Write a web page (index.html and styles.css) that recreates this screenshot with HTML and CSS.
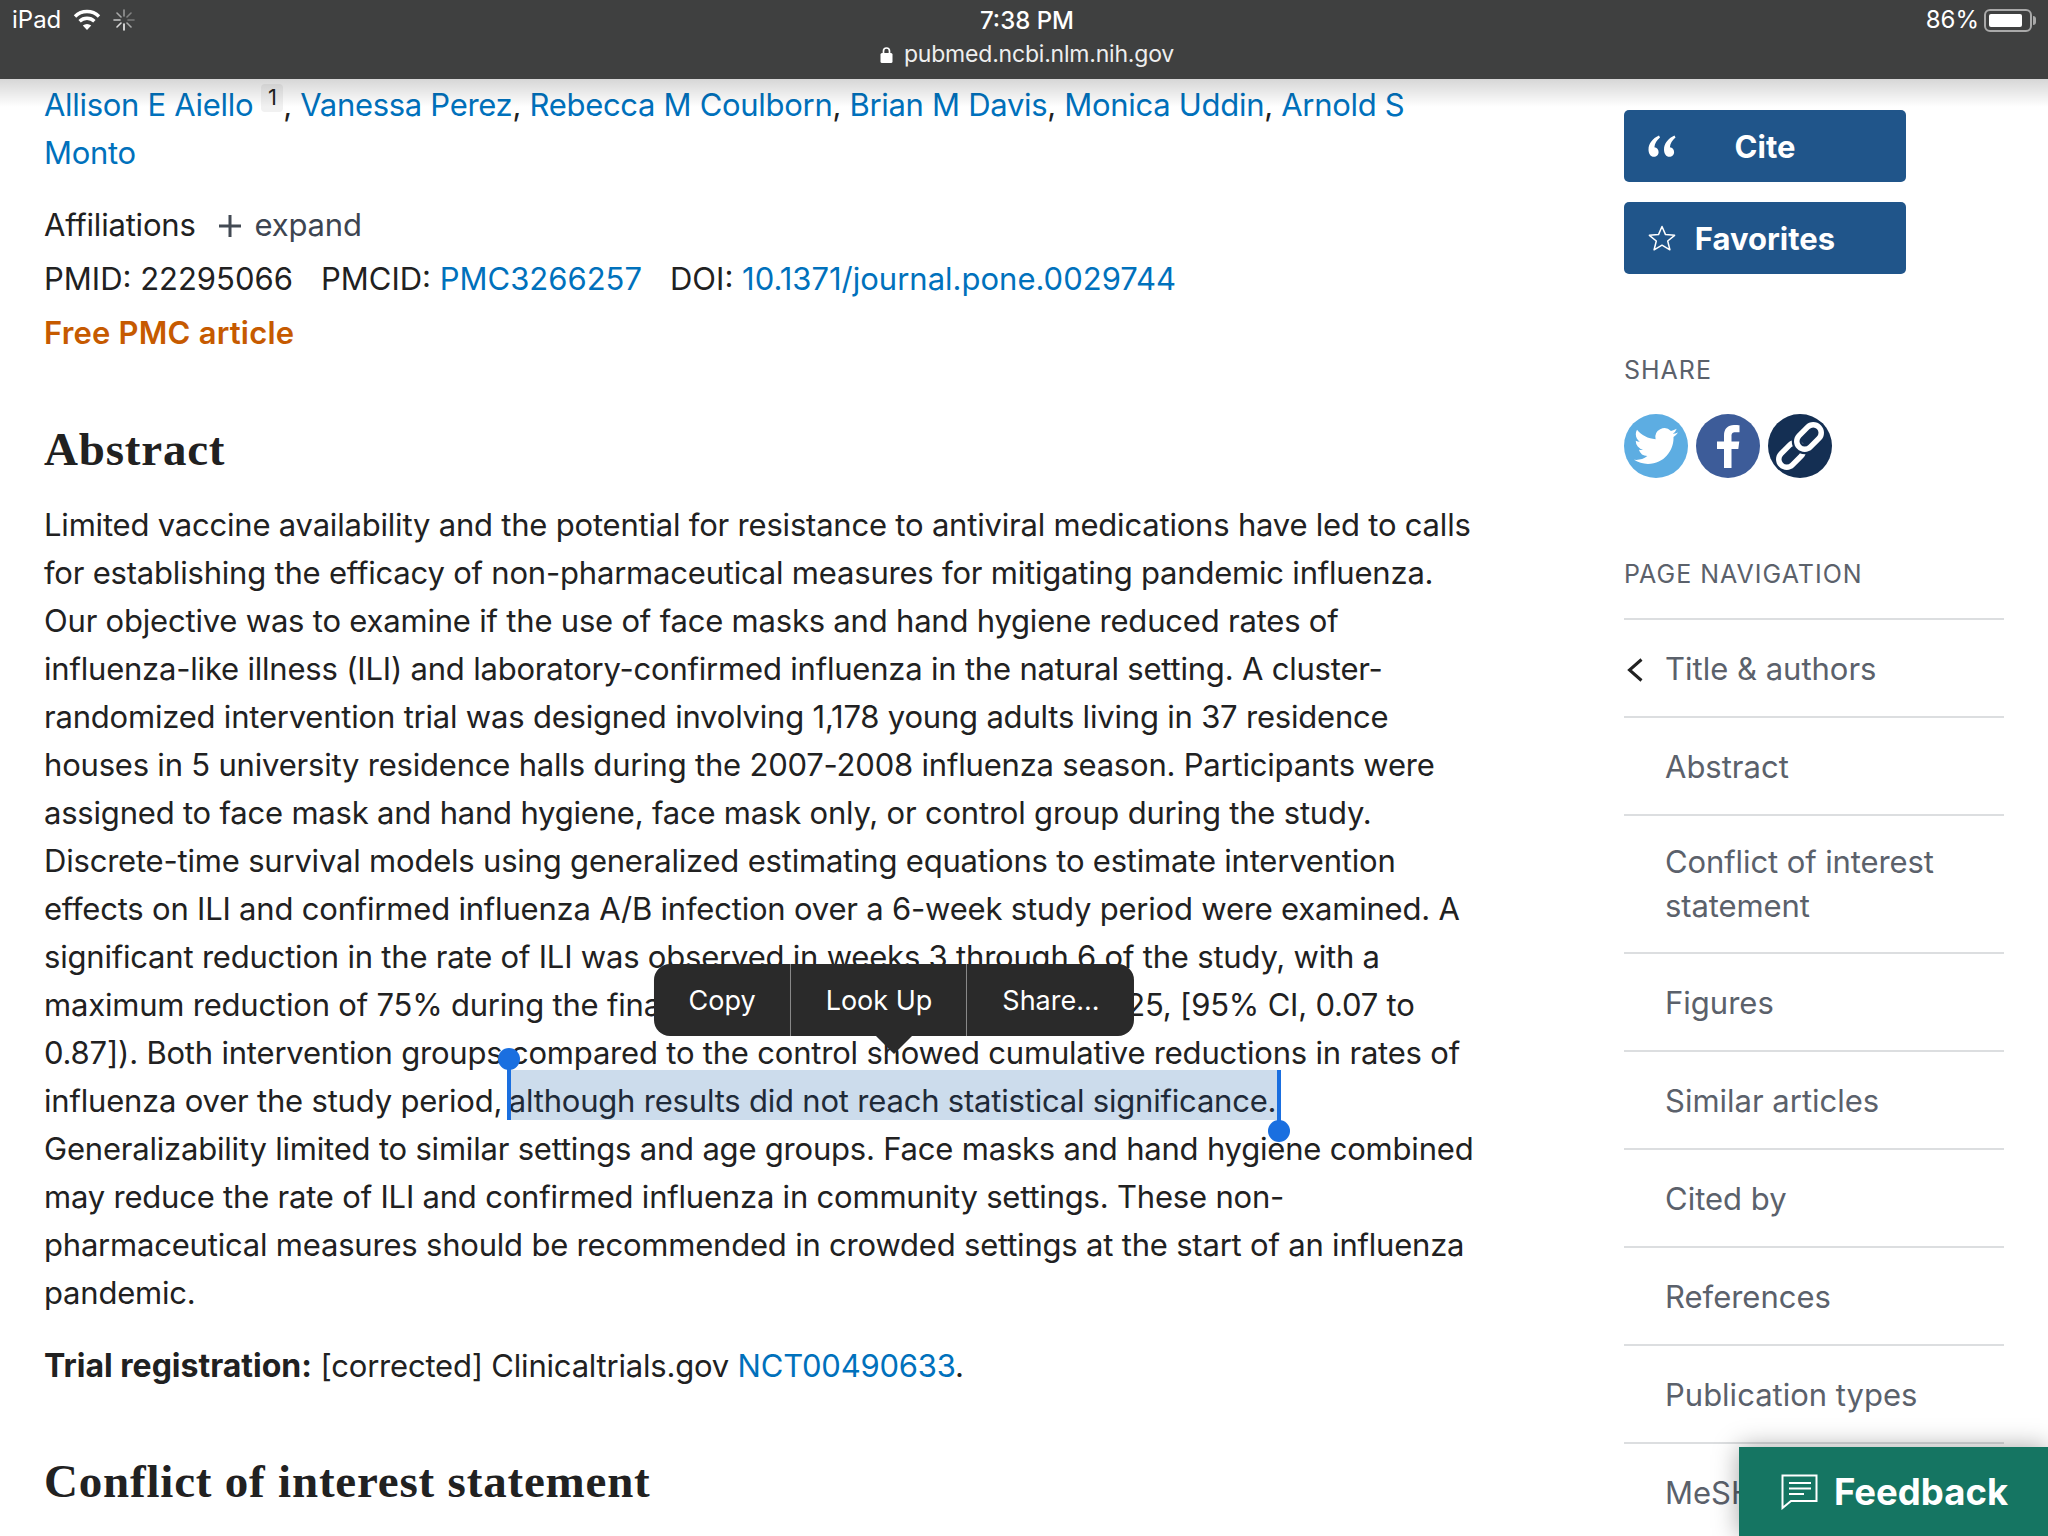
FILE: index.html
```html
<!DOCTYPE html>
<html lang="en">

<head>
    <meta charset="UTF-8">
    <title>PubMed abstract on iPad</title>
    <link rel="stylesheet" href="styles.css">
</head>

<body>
    <header class="status-bar">
        <div class="status-left">
            <span>iPad</span>
            <svg class="wifi" width="28" height="22" viewBox="0 0 28 22">
                <path d="M2 7.500 A17 17 0 0 1 26 7.500" fill="none" stroke="#fff" stroke-width="3.400" />
                <path d="M6.600 12.200 A10.600 10.600 0 0 1 21.400 12.200" fill="none" stroke="#fff" stroke-width="3.400" />
                <path d="M14 21 L9.800 16.600 A6 6 0 0 1 18.200 16.600 Z" fill="#fff" />
            </svg>
            <svg class="spinner" width="22" height="22" viewBox="0 0 22 22" stroke="#fff" stroke-width="1.600" stroke-linecap="round">
                <path d="M11 1v6" opacity=".45" />
                <path d="M18 4l-4 4" opacity=".35" />
                <path d="M21 11h-6" opacity=".3" />
                <path d="M18 18l-4-4" opacity=".55" />
                <path d="M11 21v-6" opacity=".95" />
                <path d="M4 18l4-4" opacity=".8" />
                <path d="M1 11h6" opacity=".7" />
                <path d="M4 4l4 4" opacity=".55" />
            </svg>
        </div>
        <div class="status-center">
            <div class="clock">7:38 PM</div>
            <div class="url">
                <svg width="13" height="17" viewBox="0 0 13 17">
                    <path d="M3.500 8V5a3 3 0 0 1 6 0v3" fill="none" stroke="#fff" stroke-width="1.700" />
                    <rect x="0.500" y="7" width="12" height="10" rx="1.500" fill="#fff" />
                </svg>
                <span>pubmed.ncbi.nlm.nih.gov</span>
            </div>
        </div>
        <div class="status-right">
            <span>86%</span>
            <div class="battery"><div class="battery-fill"></div></div>
        </div>
    </header>
    <div class="bar-shadow"></div>

    <div class="page">
        <main class="article">
            <p class="authors">
                <a href="#">Allison E Aiello</a><sup class="aff-badge">1</sup>, <a href="#">Vanessa Perez</a>, <a href="#">Rebecca M Coulborn</a>, <a href="#">Brian M Davis</a>, <a href="#">Monica Uddin</a>, <a href="#">Arnold S</a><br>
                <a href="#">Monto</a>
            </p>
            <p class="affiliations">
                <span>Affiliations</span>
                <svg width="24" height="24" viewBox="0 0 24 24"><path d="M12 1v22M1 12h22" stroke="#434a54" stroke-width="3" /></svg>
                <span class="expand">expand</span>
            </p>
            <p class="identifiers">
                <span>PMID: 22295066</span>
                <span>PMCID: <a href="#">PMC3266257</a></span>
                <span>DOI: <a href="#">10.1371/journal.pone.0029744</a></span>
            </p>
            <p class="free-article">Free PMC article</p>

            <h2 class="section-title">Abstract</h2>
            <p class="abstract">
                Limited vaccine availability and the potential for resistance to antiviral medications have led to calls<br>
                for establishing the efficacy of non-pharmaceutical measures for mitigating pandemic influenza.<br>
                Our objective was to examine if the use of face masks and hand hygiene reduced rates of<br>
                influenza-like illness (ILI) and laboratory-confirmed influenza in the natural setting. A cluster-<br>
                randomized intervention trial was designed involving 1,178 young adults living in 37 residence<br>
                houses in 5 university residence halls during the 2007-2008 influenza season. Participants were<br>
                assigned to face mask and hand hygiene, face mask only, or control group during the study.<br>
                Discrete-time survival models using generalized estimating equations to estimate intervention<br>
                effects on ILI and confirmed influenza A/B infection over a 6-week study period were examined. A<br>
                significant reduction in the rate of ILI was observed in weeks 3 through 6 of the study, with a<br>
                maximum reduction of 75% during the fina<span class="under-menu">l study week (rate ratio [RR] = 0.</span>25, [95% CI, 0.07 to<br>
                0.87]). Both intervention groups compared to the control showed cumulative reductions in rates of<br>
                influenza over the study period, <span class="selection">although results did not reach statistical significance.<span class="handle handle-start"></span><span class="handle handle-end"></span><span class="edit-menu"><span class="menu-item">Copy</span><span class="menu-item">Look Up</span><span class="menu-item">Share...</span></span></span><br>
                Generalizability limited to similar settings and age groups. Face masks and hand hygiene combined<br>
                may reduce the rate of ILI and confirmed influenza in community settings. These non-<br>
                pharmaceutical measures should be recommended in crowded settings at the start of an influenza<br>
                pandemic.
            </p>
            <p class="trial"><strong>Trial registration:</strong> [corrected] Clinicaltrials.gov <a href="#">NCT00490633</a>.</p>

            <h2 class="section-title conflict">Conflict of interest statement</h2>
        </main>

        <aside class="sidebar">
            <a class="action-btn" href="#">
                <svg width="28" height="22" viewBox="0 0 28 22" fill="#fff">
                    <path d="M11 0.500 C4.500 3.500 0.500 8.500 0.500 14.500 C0.500 19 2.800 21.800 5.800 21.800 C8.600 21.800 10.600 19.800 10.600 17 C10.600 14.400 8.900 12.600 6.400 12.300 C6.800 8.600 8.600 5.400 12 2.600 Z" />
                    <path d="M26.500 0.500 C20 3.500 16 8.500 16 14.500 C16 19 18.300 21.800 21.300 21.800 C24.100 21.800 26.100 19.800 26.100 17 C26.100 14.400 24.400 12.600 21.900 12.300 C22.300 8.600 24.100 5.400 27.500 2.600 Z" />
                </svg>
                <span>Cite</span>
            </a>
            <a class="action-btn" href="#">
                <svg width="28" height="26" viewBox="0 0 28 26">
                    <path d="M14 1.500 L17.500 9.600 L26.600 10.300 L19.700 16 L21.900 24.800 L14 20.200 L6.100 24.800 L8.300 16 L1.400 10.300 L10.500 9.600 Z" fill="none" stroke="#fff" stroke-width="1.500" stroke-linejoin="round" />
                </svg>
                <span>Favorites</span>
            </a>

            <h3 class="side-label share-label">SHARE</h3>
            <div class="share-row">
                <a class="share-icon twitter" href="#">
                    <svg width="44" height="44" viewBox="0 0 24 24" fill="#fff">
                        <path d="M23.953 4.570a10 10 0 0 1-2.825.775 4.958 4.958 0 0 0 2.163-2.723c-.951.555-2.005.959-3.127 1.184a4.920 4.920 0 0 0-8.384 4.482C7.690 8.095 4.067 6.130 1.640 3.162a4.822 4.822 0 0 0-.666 2.475c0 1.710.870 3.213 2.188 4.096a4.904 4.904 0 0 1-2.228-.616v.060a4.923 4.923 0 0 0 3.946 4.827 4.996 4.996 0 0 1-2.212.085 4.936 4.936 0 0 0 4.604 3.417 9.867 9.867 0 0 1-6.102 2.105c-.390 0-.779-.023-1.170-.067a13.995 13.995 0 0 0 7.557 2.209c9.053 0 13.998-7.496 13.998-13.985 0-.210 0-.420-.015-.630A9.935 9.935 0 0 0 24 4.590z" />
                    </svg>
                </a>
                <a class="share-icon facebook" href="#">
                    <svg width="24" height="44" viewBox="0 0 24 44" fill="#fff">
                        <path d="M8 44V25H1v-7.500h7v-6C8 4.500 12 1 18 1c2.500 0 4.500.2 5.500.3v7h-4c-3.200 0-4 1.500-4 3.800v5.400h7.800l-1 7.500h-6.800v19z" />
                    </svg>
                </a>
                <a class="share-icon permalink" href="#">
                    <svg width="64" height="64" viewBox="0 0 64 64" fill="none">
                        <rect x="9" y="33" width="28" height="16" rx="8" transform="rotate(-45 23 41)" stroke="#fff" stroke-width="5.500" />
                        <rect x="27" y="15" width="28" height="16" rx="8" transform="rotate(-45 41 23)" stroke="#142f53" stroke-width="10" />
                        <rect x="27" y="15" width="28" height="16" rx="8" transform="rotate(-45 41 23)" stroke="#fff" stroke-width="5.500" />
                    </svg>
                </a>
            </div>

            <h3 class="side-label nav-label">PAGE NAVIGATION</h3>
            <ul class="page-nav">
                <li class="nav-current">
                    <svg class="chevron" width="16" height="24" viewBox="0 0 16 24"><path d="M14.500 1.500 L2.500 12 L14.500 22.500" fill="none" stroke="#212121" stroke-width="3" /></svg>
                    Title &amp; authors
                </li>
                <li>Abstract</li>
                <li class="nav-two-lines">Conflict of interest<br>statement</li>
                <li>Figures</li>
                <li>Similar articles</li>
                <li>Cited by</li>
                <li>References</li>
                <li>Publication types</li>
                <li>MeSH terms</li>
            </ul>
        </aside>
    </div>

    <a class="feedback" href="#">
        <svg width="37" height="36" viewBox="0 0 37 36" fill="none" stroke="#fff" stroke-width="2">
            <path d="M1.500 1.500 H35.500 V27 H10 L1.500 34 Z" />
            <path d="M8 9 H30 M8 14.500 H30 M8 20 H23" />
        </svg>
        <span>Feedback</span>
    </a>
</body>

</html>
```
FILE: styles.css
```css
* {
    margin: 0;
    padding: 0;
    box-sizing: border-box;
}

html,
body {
    height: 1536px;
    overflow: hidden;
}

body {
    position: relative;
    background-color: #fff;
    color: #212121;
    font-family: Inter, "Liberation Sans", sans-serif;
    font-size: 31px;
    letter-spacing: -0.2px;
    line-height: 48px;
}

a {
    color: #0071bc;
    text-decoration: none;
}

/* ios status bar */
.status-bar {
    position: relative;
    z-index: 5;
    display: grid;
    grid-template-columns: 1fr auto 1fr;
    height: 79px;
    padding: 0 12px;
    background-color: #3f4040;
    color: #fff;
    font-size: 24px;
    letter-spacing: 0;
    line-height: 30px;
}

.status-left {
    display: flex;
    align-items: center;
    gap: 12px;
    height: 40px;
}

.status-center {
    margin-left: 6px;
    padding-top: 6px;
    text-align: center;
}

.clock {
    font-weight: 500;
}

.url {
    display: flex;
    align-items: center;
    justify-content: center;
    gap: 11px;
    margin-top: 3px;
    color: #eee;
    font-size: 23px;
    letter-spacing: -0.2px;
}

.status-right {
    display: flex;
    align-items: center;
    justify-content: flex-end;
    gap: 5px;
    height: 40px;
    padding-right: 4px;
}

.battery {
    position: relative;
    width: 48px;
    height: 23px;
    padding: 3px;
    border: 2px solid #a9a9a9;
    border-radius: 6px;
}

.battery::after {
    content: "";
    position: absolute;
    top: 5px;
    right: -6px;
    width: 3px;
    height: 9px;
    border-radius: 0 3px 3px 0;
    background-color: #a9a9a9;
}

.battery-fill {
    width: 86%;
    height: 100%;
    border-radius: 2px;
    background-color: #fff;
}

.bar-shadow {
    position: absolute;
    top: 79px;
    left: 0;
    right: 0;
    z-index: 4;
    height: 28px;
    background: linear-gradient(rgba(0, 0, 0, 0.16), rgba(0, 0, 0, 0));
    pointer-events: none;
}

/* page columns */
.page {
    display: grid;
    grid-template-columns: 1580px 380px;
    padding-left: 44px;
}

.article {
    padding-top: 2px;
    white-space: nowrap;
}

.authors {
    letter-spacing: -0.3px;
}

.aff-badge {
    display: inline-block;
    position: relative;
    top: -3px;
    width: 22px;
    height: 28px;
    margin-left: 8px;
    border-radius: 4px;
    background-color: #f1f1f1;
    font-size: 22px;
    line-height: 26px;
    text-align: center;
    vertical-align: 8px;
}

.affiliations {
    display: flex;
    align-items: center;
    margin-top: 24px;
}

.affiliations svg {
    margin: 2px 13px 0 22px;
}

.expand {
    color: #3d4551;
}

.identifiers {
    display: flex;
    gap: 28px;
    margin-top: 6px;
    letter-spacing: 0;
}

.free-article {
    margin-top: 6px;
    color: #c65a00;
    font-weight: 600;
    letter-spacing: 0.2px;
}

.section-title {
    margin-top: 64px;
    font-family: "Liberation Serif", serif;
    font-size: 47px;
    font-weight: 700;
    letter-spacing: 0.8px;
    line-height: 56px;
}

.abstract {
    margin-top: 24px;
}

.trial {
    margin-top: 25px;
}

.trial strong {
    font-size: 32px;
    font-weight: 700;
    letter-spacing: 0;
}

.section-title.conflict {
    margin-top: 63px;
}

/* text selection and edit menu */
.under-menu {
    visibility: hidden;
}

.selection {
    position: relative;
    display: inline-block;
    margin-top: -7px;
    margin-left: -2px;
    padding-top: 12px;
    padding-right: 2px;
    background-color: #ccdcec;
    line-height: 38px;
    color: #1f2a38;
}

.handle {
    position: absolute;
    width: 4px;
    background-color: #1a6fe0;
}

.handle::after {
    content: "";
    position: absolute;
    left: -9px;
    width: 22px;
    height: 22px;
    border-radius: 50%;
    background-color: #1a6fe0;
}

.handle-start {
    left: -2px;
    top: -12px;
    bottom: 0;
}

.handle-start::after {
    top: -10px;
}

.handle-end {
    right: -3px;
    top: 0;
    bottom: -11px;
}

.handle-end::after {
    bottom: -11px;
}

.edit-menu {
    position: absolute;
    left: 50%;
    bottom: 84px;
    transform: translateX(-50%);
    display: flex;
    height: 72px;
    border-radius: 16px;
    background-color: #2a2a2a;
    color: #fff;
    font-size: 27px;
    letter-spacing: 0;
    line-height: 74px;
}

.edit-menu::after {
    content: "";
    position: absolute;
    left: 50%;
    top: 100%;
    margin-left: -18px;
    border-top: 18px solid #2a2a2a;
    border-left: 18px solid transparent;
    border-right: 18px solid transparent;
}

.menu-item {
    padding: 0 34px 0 35px;
}

.menu-item + .menu-item {
    border-left: 1px solid #8a8a8a;
}

/* sidebar */
.sidebar {
    padding-top: 31px;
}

.action-btn {
    display: grid;
    grid-template-columns: 1fr auto 1fr;
    align-items: center;
    width: 282px;
    height: 72px;
    margin-bottom: 20px;
    padding-left: 24px;
    border-radius: 5px;
    background-color: #20558a;
    color: #fff;
    font-weight: 700;
    letter-spacing: 0;
    white-space: nowrap;
}

.action-btn span {
    margin-left: -24px;
    padding-top: 2px;
}

.side-label {
    color: #5b616b;
    font-size: 25px;
    font-weight: 400;
    letter-spacing: 1px;
    line-height: 30px;
}

.share-label {
    margin-top: 81px;
}

.share-row {
    display: flex;
    gap: 8px;
    margin-top: 29px;
}

.share-icon {
    display: flex;
    align-items: center;
    justify-content: center;
    width: 64px;
    height: 64px;
    border-radius: 50%;
}

.twitter {
    background-color: #5dade2;
}

.facebook {
    background-color: #3d5c99;
}

.permalink {
    background-color: #142f53;
}

.nav-label {
    margin-top: 81px;
}

.page-nav {
    margin-top: 29px;
    border-top: 2px solid #dcdee0;
    list-style: none;
    color: #5b616b;
    letter-spacing: 0;
}

.page-nav li {
    position: relative;
    padding: 25px 0 23px 41px;
    border-bottom: 2px solid #dcdee0;
    line-height: 48px;
    white-space: nowrap;
}

.page-nav .nav-two-lines {
    padding: 24px 0 24px 41px;
    letter-spacing: -0.1px;
    line-height: 44px;
}

.chevron {
    position: absolute;
    left: 3px;
    top: 38px;
}

/* feedback tab */
.feedback {
    position: absolute;
    right: 0;
    bottom: 0;
    z-index: 6;
    display: flex;
    align-items: center;
    gap: 16px;
    width: 309px;
    height: 89px;
    padding-left: 42px;
    background-color: #157562;
    box-shadow: 0 0 24px rgba(0, 0, 0, 0.35);
    color: #fff;
    font-size: 36.500px;
    font-weight: 700;
    letter-spacing: 0;
}
```
